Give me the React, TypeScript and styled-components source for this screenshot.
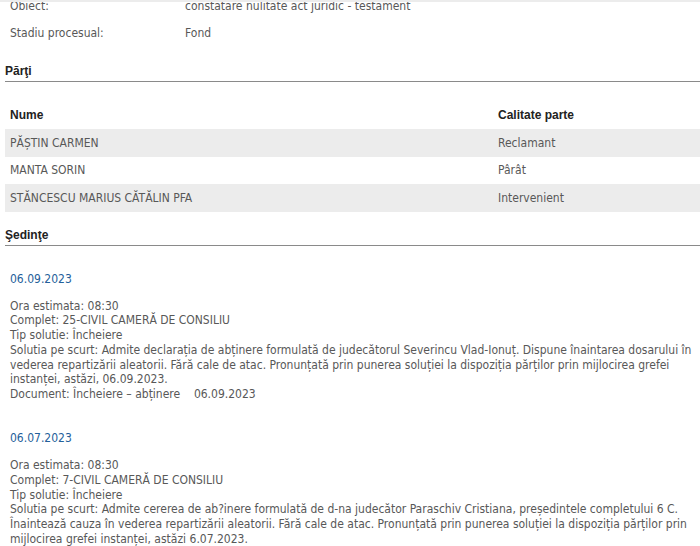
import styled, { createGlobalStyle } from "styled-components";

const GlobalStyle = createGlobalStyle`
  html, body {
    margin: 0;
    padding: 0;
    background: #fff;
  }
  body {
    font-family: "DejaVu Sans Condensed", "DejaVu Sans", sans-serif;
    font-size: 12px;
    color: #585858;
  }
`;

const Page = styled.div`
  width: 700px;
  height: 546px;
  overflow: hidden;
  border-top: 2px solid #ececec;
  box-sizing: border-box;
`;

const InfoList = styled.div`
  margin-top: -10px;
`;

const InfoRow = styled.div`
  display: flex;
  align-items: center;
  height: 27px;
  padding-left: 10px;
`;

const InfoLabel = styled.span`
  width: 175px;
`;

const SectionTitle = styled.h2<{ $top: number }>`
  margin: 0 0 0 5px;
  padding: ${(p) => p.$top}px 0 3px;
  font-family: "Liberation Sans", Arial, sans-serif;
  font-weight: bold;
  font-size: 12px;
  color: #222;
  border-bottom: 1px solid #8a8a8a;
  line-height: 14px;
`;

const Table = styled.div`
  margin: 19px 0 0 5px;
`;

const Row = styled.div<{ $shade?: boolean; $head?: boolean }>`
  display: grid;
  grid-template-columns: 488px 1fr;
  align-items: center;
  height: ${(p) => (p.$head ? "28px" : "27.5px")};
  padding-left: 5px;
  background: ${(p) => (p.$shade ? "#ececec" : "transparent")};
  ${(p) =>
    p.$head &&
    `
    font-family: "Liberation Sans", Arial, sans-serif;
    font-weight: bold;
    color: #222;
  `}
`;

const Session = styled.div`
  padding-left: 10px;
  & + & {
    padding-top: 3px;
  }
`;

const SessionDate = styled.div`
  color: #24609a;
  line-height: 15px;
  margin-top: 26px;
  margin-bottom: 12px;
`;

const Details = styled.div`
  line-height: 14.8px;
  padding-right: 6px;
`;

const parties = [
  { name: "PĂȘTIN CARMEN", role: "Reclamant" },
  { name: "MANTA SORIN", role: "Pârât" },
  { name: "STĂNCESCU MARIUS CĂTĂLIN PFA", role: "Intervenient" },
];

const sessions = [
  {
    date: "06.09.2023",
    lines: [
      "Ora estimata: 08:30",
      "Complet: 25-CIVIL CAMERĂ DE CONSILIU",
      "Tip solutie: Încheiere",
      "Solutia pe scurt: Admite declarația de abținere formulată de judecătorul Severincu Vlad-Ionuț. Dispune înaintarea dosarului în vederea repartizării aleatorii. Fără cale de atac. Pronunțată prin punerea soluției la dispoziția părților prin mijlocirea grefei instanței, astăzi, 06.09.2023.",
      "Document: Încheiere – abținere\u00a0\u00a0\u00a0\u00a006.09.2023",
    ],
  },
  {
    date: "06.07.2023",
    lines: [
      "Ora estimata: 08:30",
      "Complet: 7-CIVIL CAMERĂ DE CONSILIU",
      "Tip solutie: Încheiere",
      "Solutia pe scurt: Admite cererea de ab?inere formulată de d-na judecător Paraschiv Cristiana, președintele completului 6 C. Înaintează cauza în vederea repartizării aleatorii. Fără cale de atac. Pronunțată prin punerea soluției la dispoziția părților prin mijlocirea grefei instanței, astăzi 6.07.2023.",
    ],
  },
];

export default function App() {
  return (
    <>
      <GlobalStyle />
      <Page>
        <InfoList>
          <InfoRow>
            <InfoLabel>Obiect:</InfoLabel>
            <span>constatare nulitate act juridic - testament</span>
          </InfoRow>
          <InfoRow>
            <InfoLabel>Stadiu procesual:</InfoLabel>
            <span>Fond</span>
          </InfoRow>
        </InfoList>

        <SectionTitle $top={18}>Părţi</SectionTitle>
        <Table>
          <Row $head>
            <span>Nume</span>
            <span>Calitate parte</span>
          </Row>
          {parties.map((p, i) => (
            <Row key={p.name} $shade={i % 2 === 0}>
              <span>{p.name}</span>
              <span>{p.role}</span>
            </Row>
          ))}
        </Table>

        <SectionTitle $top={16}>Şedinţe</SectionTitle>
        {sessions.map((s) => (
          <Session key={s.date}>
            <SessionDate>{s.date}</SessionDate>
            <Details>
              {s.lines.map((l) => (
                <div key={l}>{l}</div>
              ))}
            </Details>
          </Session>
        ))}
      </Page>
    </>
  );
}
